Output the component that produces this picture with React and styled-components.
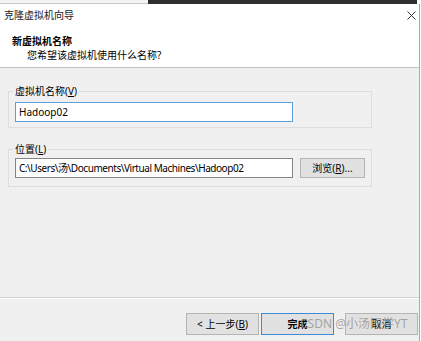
import React from "react";
import styled, { createGlobalStyle } from "styled-components";

const Global = createGlobalStyle`
  html, body { margin: 0; padding: 0; background: #ffffff; }
  body { font-family: "Noto Sans", "Noto Sans CJK SC", sans-serif; font-size: 10px; color: #000; }
  * { box-sizing: border-box; }
`;

const Page = styled.div`
  width: 421px;
  height: 341px;
  display: flex;
  flex-direction: column;
  overflow: hidden;
  background: #ffffff;
`;

const TopStrip = styled.div`
  height: 4px;
  display: flex;
  flex: none;
`;

const BackTab = styled.div`
  width: 148px;
  background: #f3f3f3;
  border-bottom: 1px solid #c9c9c9;
`;

const DarkBar = styled.div`
  width: 269px;
  background: #2f2f2f;
`;

const Window = styled.div`
  width: 420px;
  flex: 1;
  display: flex;
  flex-direction: column;
  background: #f0f0f0;
  border-right: 1px solid #a8a8a8;
`;

const TitleBar = styled.div`
  height: 22px;
  display: flex;
  align-items: center;
  justify-content: space-between;
  padding: 0 3px 0 4px;
  background: #ffffff;
  line-height: 14px;
  color: #1a1a1a;
`;

const CloseIcon = styled.svg`
  width: 9px;
  height: 9px;
  display: block;
`;

const Header = styled.div`
  background: #ffffff;
  padding: 8px 0 5px 12px;
  border-bottom: 1px solid #c4c4c4;
  line-height: 14px;
`;

const HeaderTitle = styled.div`
  font-weight: bold;
`;

const HeaderSub = styled.div`
  padding-left: 15px;
`;

const Body = styled.div`
  flex: 1;
  padding: 16px 0 0 8px;
  display: flex;
  flex-direction: column;
  gap: 14px;
  border-bottom: 1px solid #d0d0d0;
  box-shadow: 0 1px 0 #ffffff;
`;

const Group = styled.fieldset`
  margin: 0;
  width: 364px;
  min-width: 0;
  border: 1px solid #dedede;
  padding: ${(p) => p.$pt}px 6px ${(p) => p.$pb}px 6px;
  display: flex;
  gap: 7px;
  align-items: center;
`;

const Legend = styled.legend`
  padding: 0 2px;
  margin-left: -2px;
  line-height: 14px;
  color: #000;
`;

const TextBox = styled.div`
  width: 278px;
  height: 20px;
  border: 1px solid ${(p) => (p.$focus ? "#5f9ed8" : "#858585")};
  background: #ffffff;
  padding: 0 3px;
  display: flex;
  align-items: center;
  white-space: nowrap;
  overflow: hidden;
  line-height: 14px;
  letter-spacing: ${(p) => (p.$tight ? "-0.45px" : "0")};
`;

const Button = styled.div`
  width: ${(p) => p.$w}px;
  height: ${(p) => p.$h}px;
  background: #e1e1e1;
  border: 1px solid ${(p) => (p.$primary ? "#3d8ad6" : "#b4b4b4")};
  display: flex;
  align-items: center;
  justify-content: center;
  line-height: 14px;
  color: #000;
  flex: none;
  font-weight: ${(p) => (p.$primary ? 600 : 400)};
`;

const Footer = styled.div`
  height: 43px;
  padding: 15px 1px 0 0;
  display: flex;
  justify-content: flex-end;
  position: relative;
`;

const ButtonPair = styled.div`
  display: flex;
  gap: 2px;
  margin-right: 11px;
`;

const Watermark = styled.div`
  position: absolute;
  left: 300px;
  top: 18px;
  font-size: 12px;
  line-height: 16px;
  color: rgba(140, 140, 140, 0.75);
  white-space: nowrap;
  pointer-events: none;
`;

export default function App() {
  return (
    <>
      <Global />
      <Page>
        <TopStrip>
          <BackTab />
          <DarkBar />
        </TopStrip>
        <Window>
          <TitleBar>
            <span>克隆虚拟机向导</span>
            <CloseIcon viewBox="0 0 9 9">
              <path d="M0.5 0.5 L8.5 8.5 M8.5 0.5 L0.5 8.5" stroke="#333" strokeWidth="1" fill="none" />
            </CloseIcon>
          </TitleBar>
          <Header>
            <HeaderTitle>新虚拟机名称</HeaderTitle>
            <HeaderSub>您希望该虚拟机使用什么名称?</HeaderSub>
          </Header>
          <Body>
            <Group $pt={4} $pb={5}>
              <Legend>
                虚拟机名称(<u>V</u>)
              </Legend>
              <TextBox $focus>Hadoop02</TextBox>
            </Group>
            <Group $pt={2} $pb={8}>
              <Legend>
                位置(<u>L</u>)
              </Legend>
              <TextBox $tight>C:\Users\汤\Documents\Virtual Machines\Hadoop02</TextBox>
              <Button $w={65} $h={20}>
                浏览(<u>R</u>)...
              </Button>
            </Group>
          </Body>
          <Footer>
            <ButtonPair>
              <Button $w={73} $h={22}>
                &lt; 上一步(<u>B</u>)
              </Button>
              <Button $w={73} $h={22} $primary>
                完成
              </Button>
            </ButtonPair>
            <Button $w={73} $h={22}>
              取消
            </Button>
            <Watermark>CSDN @小汤同学YT</Watermark>
          </Footer>
        </Window>
      </Page>
    </>
  );
}
